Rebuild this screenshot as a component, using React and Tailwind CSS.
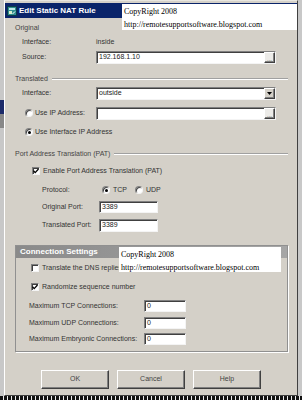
import React from 'react'

const sunken = 'border border-t-[#808080] border-l-[#808080] border-b-[#f4f4f4] border-r-[#f4f4f4] shadow-[inset_1px_1px_0_#404040]'
const raised = 'border border-t-white border-l-white border-b-[#404040] border-r-[#404040] shadow-[inset_-1px_-1px_0_#808080]'

const Radio = ({ on }) => (
  <span className={`flex items-center justify-center w-[8px] h-[8px] rounded-full bg-white ${sunken}`}>
    {on && <span className="w-[3px] h-[3px] rounded-full bg-black" />}
  </span>
)

const Check = ({ on }) => (
  <span className={`flex items-center justify-center w-[8px] h-[8px] bg-white ${sunken}`}>
    {on && (
      <svg width="6" height="6" viewBox="0 0 6 6">
        <path d="M0.5 2.8 L2.2 4.6 L5.5 1" stroke="#000" strokeWidth="1.3" fill="none" />
      </svg>
    )}
  </span>
)

const Dots = () => (
  <span className={`flex items-end justify-center w-[11px] h-[11px] bg-[#ecebe8] ${raised} text-[6px] leading-[6px] text-[#555]`}>
    ...
  </span>
)

const Arrow = () => (
  <span className={`flex items-center justify-center w-[11px] h-[11px] bg-[#d4d0c8] ${raised}`}>
    <svg width="5" height="3" viewBox="0 0 5 3">
      <path d="M0 0 H5 L2.5 3 Z" fill="#000" />
    </svg>
  </span>
)

const Field = ({ value, w, h = 'h-[13px]', btn }) => (
  <div className={`flex items-center justify-between bg-white ${sunken} ${w} ${h}`}>
    <span className="pl-[2px] text-[#222]">{value}</span>
    {btn}
  </div>
)

const Row = ({ className = '', children }) => (
  <div className={`flex items-center h-[14px] whitespace-nowrap ${className}`}>{children}</div>
)

const Group = ({ label, className = '' }) => (
  <Row className={className}>
    <span className="text-[#444]">{label}</span>
    <div className="flex-1 ml-[4px] h-[2px] border-t border-t-[#a0a0a0] border-b border-b-white" />
  </Row>
)

const Copy = ({ className = '' }) => (
  <div className={`absolute bg-white font-['Liberation_Serif','Times_New_Roman',serif] text-[8px] leading-[13px] text-black pl-[2px] pt-[1px] whitespace-nowrap overflow-hidden ${className}`}>
    <div>CopyRight 2008</div>
    <div>http://remotesupportsoftware.blogspot.com</div>
  </div>
)

export default function App() {
  return (
    <div className="relative w-[302px] h-[400px] overflow-hidden bg-[#c8c8c8] font-['Liberation_Sans',Arial,sans-serif] text-[7px] text-[#333]">
      <div className="flex h-[396px]">
        <div className="w-[4px] flex flex-col">
          <div className="h-[100px]" />
          <div className="h-[14px] bg-[#1c2b6a]" />
          <div className="h-[14px] bg-[#888]" />
        </div>

        <div className="w-[294px] flex flex-col pt-[2px] bg-[#d4d0c8] border border-l-white border-t-[#e8e6e0] border-r-[#404040] border-b-[#404040]">
          {/* Title bar */}
          <div className="flex items-center h-[15px] bg-[#0a246a] pl-[2px] gap-[2px]">
            <svg width="10" height="10" viewBox="0 0 10 10">
              <rect x="0.5" y="0.5" width="9" height="9" fill="#2f8f8f" stroke="#0b3b4b" />
              <rect x="2" y="2" width="6" height="2" fill="#bfe6e6" />
              <rect x="2" y="5" width="3" height="3" fill="#d9f0d0" />
              <path d="M5.5 8 L8 5.5" stroke="#fff" strokeWidth="1" />
            </svg>
            <span className="text-white font-bold text-[8px]">Edit Static NAT Rule</span>
          </div>

          <div className="pl-[10px] pr-[9px] flex flex-col">
            <Row className="mt-[3px]">
              <span className="text-[#444]">Original</span>
            </Row>
            <Row className="pl-[7px]">
              <span className="w-[74px]">Interface:</span>
              <span>inside</span>
            </Row>
            <Row className="mt-[1px] pl-[7px]">
              <span className="w-[74px]">Source:</span>
              <Field value="192.168.1.10" w="w-[180px]" btn={<Dots />} />
            </Row>

            <Group label="Translated" className="mt-[8px]" />
            <Row className="pl-[7px]">
              <span className="w-[74px]">Interface:</span>
              <Field value="outside" w="w-[180px]" btn={<Arrow />} />
            </Row>
            <Row className="mt-[6px]">
              <div className="flex items-center gap-[2px] w-[81px] pl-[10px]">
                <Radio />
                <span>Use IP Address:</span>
              </div>
              <Field value="" w="w-[180px]" btn={<Dots />} />
            </Row>
            <Row className="mt-[5px] pl-[10px] gap-[2px]">
              <Radio on />
              <span>Use Interface IP Address</span>
            </Row>

            <Group label="Port Address Translation (PAT)" className="mt-[8px]" />
            <Row className="mt-[3px] pl-[17px] gap-[3px]">
              <Check on />
              <span>Enable Port Address Translation (PAT)</span>
            </Row>
            <Row className="mt-[5px] pl-[27px]">
              <span className="w-[60px]">Protocol:</span>
              <div className="flex items-center gap-[3px] w-[33px]">
                <Radio on />
                <span>TCP</span>
              </div>
              <div className="flex items-center gap-[3px]">
                <Radio />
                <span>UDP</span>
              </div>
            </Row>
            <Row className="mt-[3px] pl-[27px]">
              <span className="w-[57px]">Original Port:</span>
              <Field value="3389" w="w-[59px]" h="h-[12px]" />
            </Row>
            <Row className="mt-[4px] pl-[27px]">
              <span className="w-[57px]">Translated Port:</span>
              <Field value="3389" w="w-[59px]" h="h-[13px]" />
            </Row>

            {/* Connection settings */}
            <div className="mt-[13px] flex flex-col pb-[5px] border border-[#909090] shadow-[1px_1px_0_#fff]">
              <div className="flex items-center h-[12px] pl-[4px] bg-[linear-gradient(90deg,#8a8a8a,#a6a6a6)] text-white font-bold text-[8px]">
                Connection Settings
              </div>
              <Row className="mt-[3px] pl-[15px] gap-[3px]">
                <Check />
                <span>Translate the DNS replies</span>
              </Row>
              <Row className="mt-[5px] pl-[15px] gap-[3px]">
                <Check on />
                <span>Randomize sequence number</span>
              </Row>
              <Row className="mt-[5px] pl-[13px]">
                <span className="w-[115px]">Maximum TCP Connections:</span>
                <Field value="0" w="w-[42px]" h="h-[12px]" />
              </Row>
              <Row className="mt-[3px] pl-[13px]">
                <span className="w-[115px]">Maximum UDP Connections:</span>
                <Field value="0" w="w-[42px]" h="h-[12px]" />
              </Row>
              <Row className="mt-[2px] pl-[13px]">
                <span className="w-[115px]">Maximum Embryonic Connections:</span>
                <Field value="0" w="w-[42px]" h="h-[12px]" />
              </Row>
            </div>
          </div>

          <div className="mt-[18px] flex justify-center gap-[8px] text-[#444]">
            {['OK', 'Cancel', 'Help'].map((b) => (
              <button key={b} className={`w-[68px] h-[19px] bg-[#d4d0c8] ${raised}`}>
                {b}
              </button>
            ))}
          </div>
        </div>

        <div className="w-[4px] bg-[#c8c8c8]" />
      </div>
      <div className="h-[4px] bg-[repeating-linear-gradient(90deg,#111_0_3px,#eee_3px_4px)]" />

      <Copy className="left-[122px] top-[4px] w-[175px] h-[26px]" />
      <Copy className="left-[119px] top-[247px] w-[162px] h-[25px]" />
    </div>
  )
}
